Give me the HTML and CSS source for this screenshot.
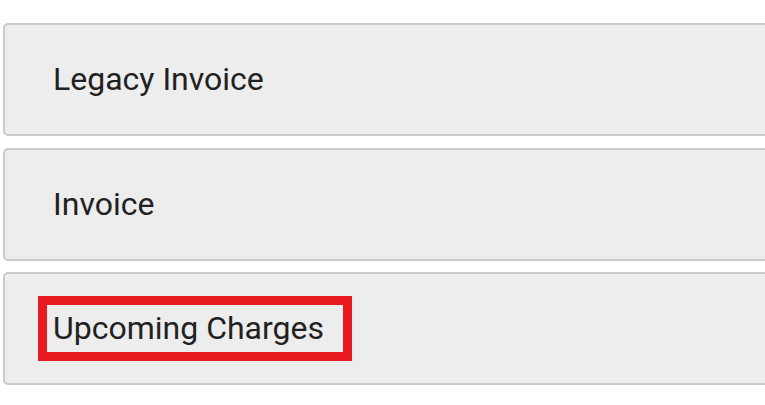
FILE: index.html
```html
<!DOCTYPE html>
<html lang="en">
  <head>
    <meta charset="UTF-8" />
    <meta name="viewport" content="width=device-width, initial-scale=1.0" />
    <title>Billing</title>
    <link rel="stylesheet" href="styles.css">
  </head>
  <body>
    <div class="list">
      <div class="card"><span class="label">Legacy Invoice</span></div>
      <div class="card"><span class="label">Invoice</span></div>
      <div class="card"><span class="label marked">Upcoming Charges</span></div>
    </div>
  </body>
</html>
```

FILE: styles.css
```css
* {
  margin: 0;
  padding: 0;
  box-sizing: border-box;
}
body {
  background: #fff;
  color: #212121;
  font-family: Roboto, "Liberation Sans", sans-serif;
}
.list {
  display: flex;
  flex-direction: column;
  gap: 11.5px;
  padding: 23px 0 0 3px;
  margin-right: -20px;
}
.card {
  display: flex;
  align-items: center;
  height: 113px;
  padding: 0 0 0 48px;
  background: #ededed;
  border: solid 2px #cacaca;
  border-radius: 5px;
}
.label {
  font-size: 32px;
  line-height: 47px;
}
.marked {
  margin-left: -15px;
  padding: 0 19px 0 6px;
  border: solid 9px #e81a1f;
}
```
